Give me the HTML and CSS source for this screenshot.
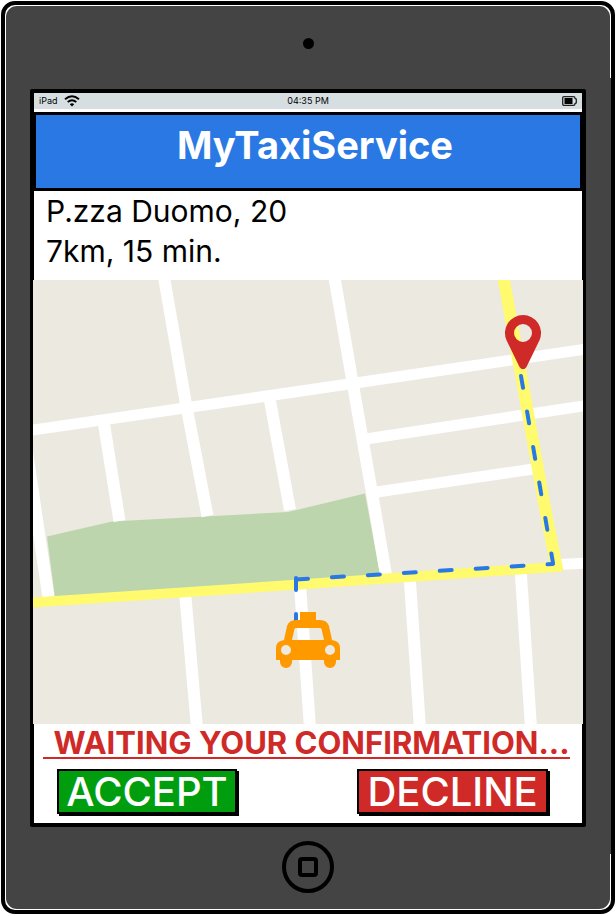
FILE: index.html
```html
<!DOCTYPE html>
<html lang="en">
<head>
<meta charset="utf-8">
<meta name="viewport" content="width=device-width, initial-scale=1">
<title>MyTaxiService</title>
<link rel="stylesheet" href="styles.css">
</head>
<body>
<div class="device">
  <div class="bezel">
    <div class="bezel-top"><span class="camera"></span></div>
    <main class="screen">
      <div class="status">
        <div class="status-left">
          <span>iPad</span>
          <svg class="wifi" viewBox="0 0 16 12" aria-hidden="true">
            <path d="M1 4.2Q8-1.600 15 4.200" fill="none" stroke="#000" stroke-width="2"/>
            <path d="M3.700 7Q8 3.400 12.300 7" fill="none" stroke="#000" stroke-width="1.800"/>
            <path d="M5.800 9.200Q8 7.400 10.200 9.200L8 11.400Z"/>
          </svg>
        </div>
        <time>04:35 PM</time>
        <div class="status-right">
          <svg class="battery" viewBox="0 0 15 10" aria-hidden="true">
            <path d="M2 .7H11.500Q13 .7 13 2.300L14.300 3.200V6.800L13 7.700Q13 9.300 11.500 9.300H2Q.7 9.300 .7 8V2Q.7 .7 2 .7Z" fill="none" stroke="#222" stroke-width="1.300"/>
            <rect x="2.500" y="2" width="8" height="6"/>
          </svg>
        </div>
      </div>
      <header class="title"><h1>MyTaxiService</h1></header>
      <div class="trip">
        <p>P.zza Duomo, 20</p>
        <p>7km, 15 min.</p>
      </div>
      <svg class="map" viewBox="33 280 550 444" role="img" aria-label="Route map">
        <rect x="33" y="280" width="550" height="444" fill="#ece9e1"/>
        <path d="M47 536.500L112 521.500L288 512L365 493.500L381 580L55 598Z" fill="#bcd5ad"/>
        <g fill="none" stroke="#fff" stroke-width="12">
          <path d="M30 430.500L308 390L586 349" stroke-width="11"/>
          <path d="M163.600 275L186 404L207.500 516"/>
          <path d="M334 275L353 385L375 510L386 575"/>
          <path d="M104 424L119.500 521"/>
          <path d="M269.500 398L290 510"/>
          <path d="M26 445L48.500 598"/>
          <path d="M366 439L586 405.500" stroke-width="11"/>
          <path d="M377 492L533 469" stroke-width="11"/>
          <path d="M560 564.500L586 563" stroke-width="11"/>
          <path d="M185 592L197 728"/>
          <path d="M300 585L310 728"/>
          <path d="M409.500 575L420 728"/>
          <path d="M520.500 568L531 728"/>
        </g>
        <g fill="none" stroke="#fffa6e">
          <path d="M503 275L545 508L557.500 571.500" stroke-width="12"/>
          <path d="M30 602.700L306 584L562 566.500" stroke-width="10"/>
        </g>
        <g fill="none" stroke="#2a78e4" stroke-width="4" stroke-linecap="round" stroke-dasharray="12 24">
          <path d="M521 376L553 563"/>
          <path d="M296 579.500L553 564"/>
          <path d="M296 578V622"/>
        </g>
        <path fill="#cf2a27" fill-rule="evenodd" d="M523 315A18 18 0 0 1 539.600 340L526.500 367Q523 371.500 519.500 367L506.400 340A18 18 0 0 1 523 315ZM523 324A9 9 0 1 0 523 342A9 9 0 1 0 523 324Z"/>
        <path fill="#ff9900" fill-rule="evenodd" d="M300 612H316V620H320Q327 620 329 626L332 640Q340 641 340 648V660H336V662A6 6 0 0 1 324 662V660H292V662A6 6 0 0 1 280 662V660H276V648Q276 641 284 640L287 626Q289 620 296 620H300ZM296 628Q295 628 294.500 629L292 640H324L321.500 629Q321 628 320 628ZM286 645A5 5 0 1 0 286 655A5 5 0 1 0 286 645ZM330 645A5 5 0 1 0 330 655A5 5 0 1 0 330 645Z"/>
      </svg>
      <p class="waiting">WAITING YOUR CONFIRMATION...</p>
      <div class="actions">
        <button class="btn accept" type="button">ACCEPT</button>
        <button class="btn decline" type="button">DECLINE</button>
      </div>
    </main>
    <div class="bezel-bottom">
      <button class="home" type="button" aria-label="Home"><span class="home-mark"></span></button>
    </div>
  </div>
</div>
</body>
</html>
```
FILE: styles.css
```css
* { box-sizing: border-box; }

body {
  margin: 0;
  padding: 1px;
  background: #fff;
  color: #000;
  font-family: Inter, "Open Sans", sans-serif;
}

h1, p { margin: 0; font-weight: 400; }

.device {
  border: 4px solid #000;
  border-radius: 14px;
  /* the light rim fades into the casing along the right edge */
  background: linear-gradient(#444, #444) right 0 top 73px / 1px calc(100% - 129px) no-repeat #fff;
  padding: 1px;
}

.bezel {
  background: #444;
  border-radius: 11px;
  padding: 0 24px;
}

.bezel-top {
  display: flex;
  justify-content: center;
  height: 83px;
  padding-top: 32px;
}

.camera {
  width: 11px;
  height: 11px;
  border-radius: 50%;
  background: #000;
}

.screen {
  background: #fff;
  border: 4px solid #000;
  border-radius: 2px;
}

.status {
  display: grid;
  grid-template-columns: 1fr auto 1fr;
  align-items: center;
  height: 16px;
  padding: 0 5px;
  background: #d7dee1;
  font-size: 9px;
  line-height: 12px;
}

.status-left { display: flex; align-items: center; gap: 6px; }
.status-right { display: flex; justify-content: flex-end; }
.wifi { width: 16px; height: 12px; }
.battery { width: 15px; height: 10px; }

.title {
  margin-top: 3px;
  height: 79px;
  padding-left: 14px;
  border: 3px solid #000;
  border-width: 3px 2px;
  background: #2a78e4;
  color: #fff;
  text-align: center;
}

.title h1 {
  font-size: 38px;
  line-height: 60px;
  font-weight: 700;
}

.trip {
  padding: 0 12px 9px;
  font-size: 30px;
  line-height: 40px;
}

.map {
  display: block;
  width: calc(100% + 2px);
  margin: 0 -1px;
}

.waiting {
  margin: 0 12px 0 9px;
  height: 35px;
  padding-left: 10px;
  border-bottom: 2px solid #cf2a27;
  color: #cf2a27;
  font-size: 31px;
  line-height: 38px;
  font-weight: 700;
  text-align: center;
  white-space: nowrap;
}

.actions {
  display: flex;
  justify-content: space-between;
  padding: 10px 34px 9px 23px;
}

.btn {
  height: 45px;
  padding: 0;
  border: 2px solid #000;
  box-shadow: 2px 2px 0 #000;
  color: #fff;
  font-family: inherit;
  font-size: 40px;
  line-height: 40px;
  font-weight: 500;
}

.accept { width: 180px; background: #009e0f; }
.decline { width: 191px; background: #cf2a27; }

.bezel-bottom {
  display: flex;
  justify-content: center;
  padding: 14px 0 16px;
}

.home {
  display: grid;
  place-items: center;
  width: 52px;
  height: 52px;
  padding: 0;
  border: 4px solid #000;
  border-radius: 50%;
  background: none;
}

.home-mark {
  width: 20px;
  height: 20px;
  border: 4px solid #000;
  border-radius: 4px;
}
```
